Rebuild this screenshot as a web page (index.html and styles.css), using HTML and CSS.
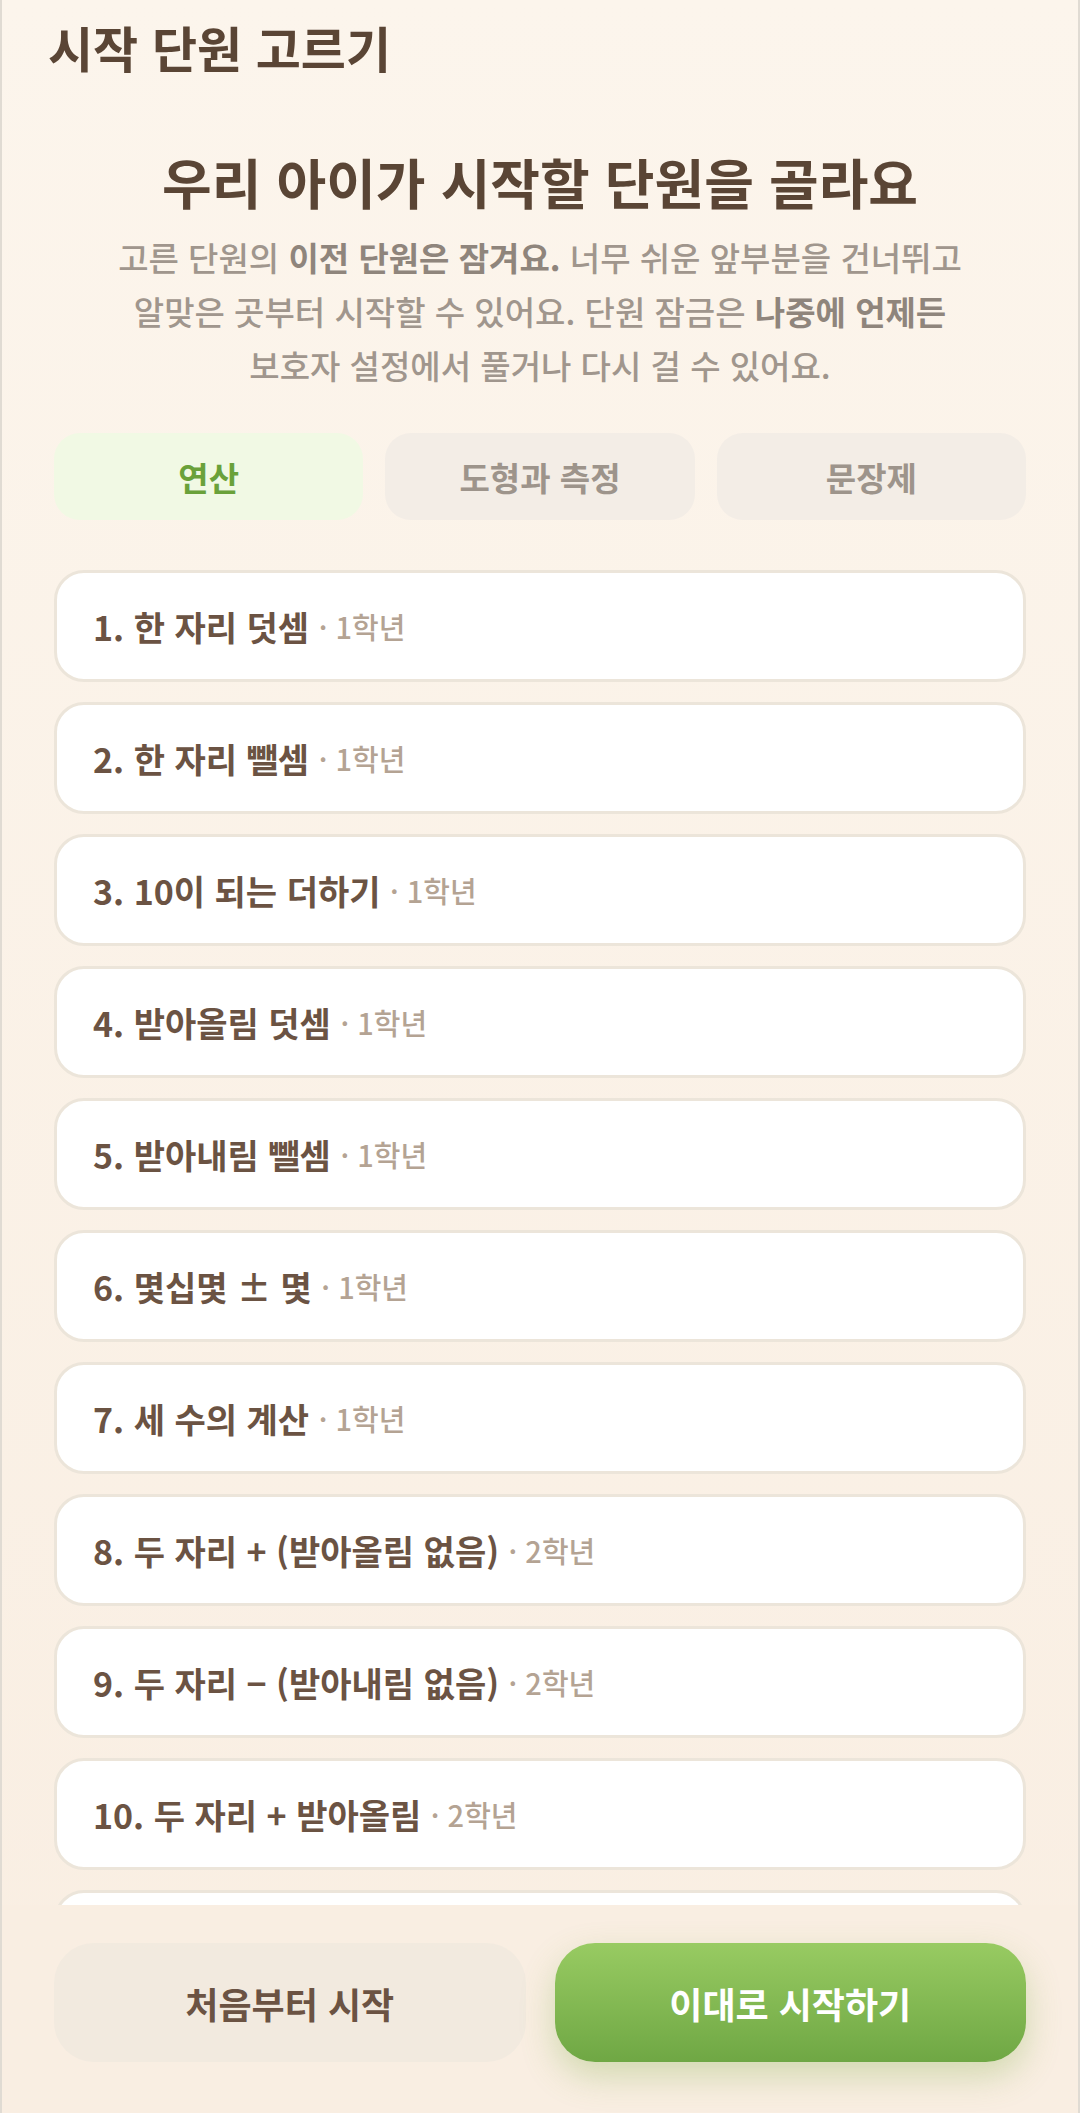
FILE: index.html
```html
<!DOCTYPE html>
<html lang="ko">
<head>
  <meta charset="UTF-8">
  <meta name="viewport" content="width=device-width, initial-scale=1.0">
  <title>시작 단원 고르기</title>
  <link rel="stylesheet" href="styles.css">
</head>
<body>

  <div class="app">
    <div class="topbar">
      <h1>시작 단원 고르기</h1>
    </div>

    <div class="intro">
      <h2>우리 아이가 시작할 단원을 골라요</h2>
      <p>고른 단원의 <strong>이전 단원은 잠겨요.</strong> 너무 쉬운 앞부분을 건너뛰고<br>
        알맞은 곳부터 시작할 수 있어요. 단원 잠금은 <strong>나중에 언제든</strong><br>
        보호자 설정에서 풀거나 다시 걸 수 있어요.</p>
    </div>

    <div class="tabs">
      <button class="tab active">연산</button>
      <button class="tab">도형과 측정</button>
      <button class="tab">문장제</button>
    </div>

    <div class="list">
      <div class="unit">1. 한 자리 덧셈 <span class="grade">· 1학년</span></div>
      <div class="unit">2. 한 자리 뺄셈 <span class="grade">· 1학년</span></div>
      <div class="unit">3. 10이 되는 더하기 <span class="grade">· 1학년</span></div>
      <div class="unit">4. 받아올림 덧셈 <span class="grade">· 1학년</span></div>
      <div class="unit">5. 받아내림 뺄셈 <span class="grade">· 1학년</span></div>
      <div class="unit">6. 몇십몇 ± 몇 <span class="grade">· 1학년</span></div>
      <div class="unit">7. 세 수의 계산 <span class="grade">· 1학년</span></div>
      <div class="unit">8. 두 자리 + (받아올림 없음) <span class="grade">· 2학년</span></div>
      <div class="unit">9. 두 자리 − (받아내림 없음) <span class="grade">· 2학년</span></div>
      <div class="unit">10. 두 자리 + 받아올림 <span class="grade">· 2학년</span></div>
      <!-- next card is scrolled under the footer -->
      <div class="unit" aria-hidden="true"></div>
    </div>

    <div class="footer">
      <button class="btn secondary">처음부터 시작</button>
      <button class="btn primary">이대로 시작하기</button>
    </div>
  </div>

</body>
</html>
```

FILE: styles.css
```css
body {
  margin: 0;
  font-family: "Noto Sans CJK KR", "Noto Sans", sans-serif;
  background-color: #ece8e2;
}
.app {
  height: 100vh;
  display: flex;
  flex-direction: column;
  box-sizing: border-box;
  border-left: 2px solid #e0dbd3;
  border-right: 2px solid #e0dbd3;
  background: linear-gradient(#fcf5ec, #f9eee2);
  overflow: hidden;
}
.topbar {
  height: 100px;
  display: flex;
  align-items: center;
  padding: 0 46px;
  flex-shrink: 0;
}
h1 {
  margin: 0 0 6px;
  font-size: 49px;
  line-height: 1.2;
  font-weight: 700;
  color: #5a4535;
}
.intro {
  text-align: center;
  padding-top: 50px;
  flex-shrink: 0;
}
h2 {
  margin: 0;
  font-size: 54px;
  line-height: 64px;
  font-weight: 700;
  color: #5a4535;
}
.intro p {
  margin: 16px 0 0;
  font-size: 33px;
  line-height: 54px;
  font-weight: 500;
  color: #a0968d;
}
.intro strong {
  font-weight: 700;
  color: #8f857c;
}
.tabs {
  display: grid;
  grid-template-columns: 1fr 1fr 1fr;
  gap: 22px;
  padding: 0 52px;
  margin-top: 41px;
  flex-shrink: 0;
}
.tab {
  height: 87px;
  border: none;
  border-radius: 26px;
  background-color: #f3ede6;
  color: #9d948b;
  font-family: inherit;
  font-size: 33px;
  font-weight: 700;
}
.tab.active {
  background-color: #f1f9e4;
  color: #6aa13a;
}
.list {
  flex: 1;
  min-height: 0;
  overflow: hidden;
  margin-top: 50px;
  padding: 0 52px;
  display: flex;
  flex-direction: column;
  gap: 20px;
}
.unit {
  flex-shrink: 0;
  height: 112px;
  box-sizing: border-box;
  display: flex;
  align-items: center;
  padding: 0 36px;
  background: #fff;
  border: 3px solid #ece5da;
  border-radius: 30px;
  font-size: 34px;
  font-weight: 700;
  color: #6b5343;
  white-space: pre;
}
.grade {
  font-size: 29px;
  font-weight: 500;
  color: #b4a393;
}
.footer {
  flex-shrink: 0;
  display: grid;
  grid-template-columns: 1fr 1fr;
  gap: 29px;
  padding: 38px 52px 51px;
  background-color: #f9eee2;
}
.btn {
  height: 119px;
  border: none;
  border-radius: 40px;
  font-family: inherit;
  font-size: 36px;
  font-weight: 700;
}
.btn.secondary {
  background-color: #f2eadf;
  color: #6b5343;
}
.btn.primary {
  background: linear-gradient(#98cb62, #6fa744);
  color: #fff;
  box-shadow: 0 14px 34px rgba(120, 170, 60, 0.3);
}
```
